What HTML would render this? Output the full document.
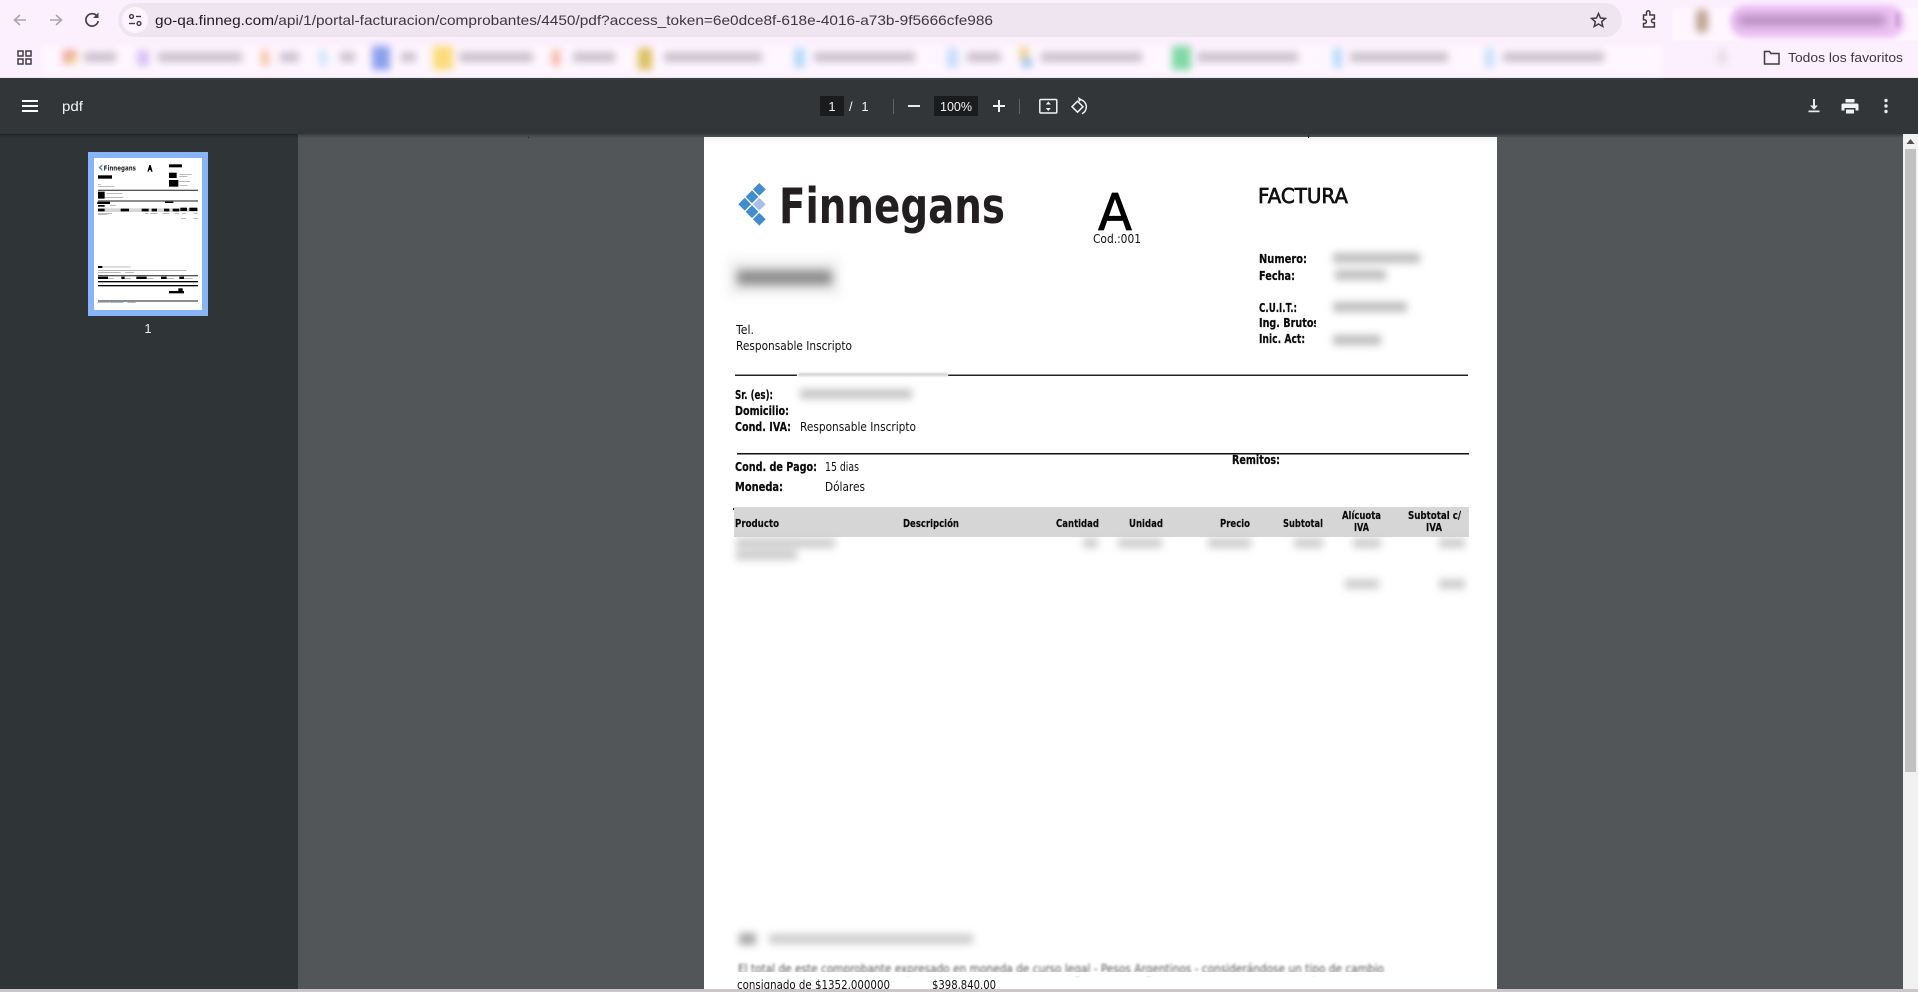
<!DOCTYPE html>
<html lang="es"><head><meta charset="utf-8"><title>pdf</title>
<style>
html,body{margin:0;padding:0;width:1918px;height:992px;overflow:hidden;background:#525659}
svg{position:absolute;left:0;top:0;display:block}
text{font-family:"DejaVu Sans","Liberation Sans",sans-serif}
.ui{font-family:"Liberation Sans",sans-serif}
.b{font-weight:700;font-size:12px;fill:#0a0a0a;stroke:#0a0a0a;stroke-width:.2px}
.r{font-size:12px;fill:#111}
.th{font-weight:700;font-size:11px;fill:#0a0a0a;stroke:#0a0a0a;stroke-width:.15px}
.s1{filter:blur(1px)}.s15{filter:blur(1.3px)}.s2{filter:blur(2px)}.s3{filter:blur(3px)}.s4{filter:blur(4px)}.s5{filter:blur(5px)}
</style></head><body>
<svg width="1918" height="992" viewBox="0 0 1918 992" xmlns="http://www.w3.org/2000/svg">
<defs>
<linearGradient id="sh" x1="0" y1="0" x2="0" y2="1"><stop offset="0" stop-color="#000" stop-opacity=".28"/><stop offset="1" stop-color="#000" stop-opacity="0"/></linearGradient>
<linearGradient id="sh2" x1="0" y1="0" x2="0" y2="1"><stop offset="0" stop-color="#000" stop-opacity=".05"/><stop offset="1" stop-color="#000" stop-opacity="0"/></linearGradient>
</defs>
<!-- Backgrounds -->
<rect x="0" y="0" width="1918" height="78" fill="#fdf0fe"/>
<rect x="0" y="77" width="1918" height="1" fill="#efe6ef"/>
<rect x="0" y="78" width="1918" height="56" fill="#323639"/>
<rect x="0" y="134" width="298" height="858" fill="#2f3437"/>
<rect x="298" y="134" width="1605" height="858" fill="#525659"/>
<rect x="0" y="134" width="1903" height="4" fill="url(#sh)"/>

<!-- URL bar -->
<rect x="118" y="3" width="1504" height="34" rx="17" fill="#efe5f1"/>
<circle cx="135" cy="20" r="13" fill="#fdf4fd"/>
<g fill="none" stroke="#3f3a44" stroke-width="1.4">
<circle cx="131.500" cy="16.500" r="1.900"/><line x1="136" y1="16.500" x2="141" y2="16.500"/>
<circle cx="139" cy="23.500" r="1.900"/><line x1="129" y1="23.500" x2="135" y2="23.500"/>
</g>
<text class="ui" x="155" y="25" font-size="14" fill="#3c3740" textLength="838" lengthAdjust="spacingAndGlyphs"><tspan fill="#1f1b24">go-qa.finneg.com</tspan>/api/1/portal-facturacion/comprobantes/4450/pdf?access_token=6e0dce8f-618e-4016-a73b-9f5666cfe986</text>
<!-- Nav icons -->
<g fill="none" stroke="#aaa4ad" stroke-width="1.600">
<path d="M26 20H15M20 15l-5.500 5 5.500 5"/>
<path d="M50 20h11M56 15l5.500 5-5.500 5"/>
</g>
<path d="M97.300 16.500A6.200 6.200 0 1 0 98.200 21" fill="none" stroke="#45404a" stroke-width="1.700"/>
<path d="M98.500 12.500v5.500h-5.500z" fill="#45404a"/>
<path d="M1598.500 13.500l2 4.500 4.900.5-3.700 3.200 1.100 4.800-4.300-2.500-4.300 2.500 1.100-4.800-3.700-3.200 4.900-.5z" fill="none" stroke="#3f3a44" stroke-width="1.500"/>
<path d="M1643.500 15h3v-2.500a1.700 1.700 0 0 1 3.400 0V15h4.500v4h-1.200a1.800 1.800 0 0 0 0 3.600h1.200v4.400h-10.900v-3.500h1a1.900 1.900 0 0 0 0-3.800h-1z" fill="none" stroke="#3f3a44" stroke-width="1.500"/>

<!-- Profile area (blurred) -->
<rect x="1673" y="8" width="245" height="33" fill="#fff6ff" class="s1"/>
<rect x="1696" y="9" width="12" height="24" rx="6" fill="#bfa28f" class="s4"/>
<rect x="1730" y="5" width="175" height="33" rx="16" fill="#eec4f5" class="s3"/>
<rect x="1738" y="15" width="148" height="11" fill="#b48abf" class="s5"/>
<rect x="1896" y="13" width="3" height="14" fill="#bb92c6" class="s2"/>

<!-- Bookmarks bar -->
<g fill="none" stroke="#3f3a44" stroke-width="1.500"><rect x="18" y="51" width="5" height="5"/><rect x="26" y="51" width="5" height="5"/><rect x="18" y="59" width="5" height="5"/><rect x="26" y="59" width="5" height="5"/></g>
<rect x="42" y="46" width="1620" height="28" fill="#fff7ff" class="s3"/>
<g class="s4">
<rect x="63" y="50" width="14" height="14" fill="#eea099"/><rect x="68" y="56" width="9" height="8" fill="#e9d698"/>
<rect x="137" y="50" width="12" height="16" fill="#d9bff3"/>
<rect x="261" y="50" width="8" height="16" fill="#f5c3a4"/>
<rect x="319" y="50" width="8" height="16" fill="#cce4f9"/>
<rect x="372" y="46" width="18" height="24" fill="#8b9feb"/>
<rect x="433" y="46" width="20" height="24" fill="#fbdb7a"/>
<rect x="552" y="50" width="8" height="16" fill="#f5b39d"/>
<rect x="638" y="48" width="14" height="22" fill="#dcc060"/>
<rect x="794" y="48" width="11" height="20" fill="#b4d9f9"/>
<rect x="947" y="48" width="11" height="20" fill="#c5dcf9"/>
<rect x="1020" y="47" width="8" height="14" fill="#ecd080"/><rect x="1022" y="58" width="10" height="10" fill="#a5c6f0"/>
<rect x="1172" y="46" width="19" height="24" fill="#80d8a5"/>
<rect x="1333" y="48" width="9" height="20" fill="#b4d9f9"/>
<rect x="1485" y="48" width="9" height="20" fill="#c5dff9"/>
<rect x="1718" y="50" width="8" height="14" fill="#e2d8e2"/>
</g>
<g fill="#c9c0cb" class="s4">
<rect x="84" y="52" width="32" height="10"/><rect x="158" y="52" width="84" height="10"/><rect x="280" y="52" width="19" height="10"/><rect x="340" y="52" width="15" height="10"/><rect x="401" y="52" width="15" height="10"/><rect x="459" y="52" width="74" height="10"/><rect x="573" y="52" width="42" height="10"/><rect x="664" y="52" width="98" height="10"/><rect x="814" y="52" width="101" height="10"/><rect x="967" y="52" width="34" height="10"/><rect x="1041" y="52" width="101" height="10"/><rect x="1197" y="52" width="101" height="10"/><rect x="1350" y="52" width="98" height="10"/><rect x="1503" y="52" width="101" height="10"/>
</g>
<path d="M1764.500 51.500h5l1.500 2h8v10.500h-14.500z" fill="none" stroke="#3f3a44" stroke-width="1.500"/>
<text class="ui" x="1788" y="62" font-size="13" fill="#3c3740" textLength="115" lengthAdjust="spacingAndGlyphs">Todos los favoritos</text>

<!-- Viewer toolbar -->
<g fill="#fff"><rect x="22" y="100" width="16" height="2"/><rect x="22" y="105" width="16" height="2"/><rect x="22" y="110" width="16" height="2"/></g>
<text class="ui" x="62" y="111" font-size="14" fill="#f1f3f4" textLength="21" lengthAdjust="spacingAndGlyphs">pdf</text>
<rect x="820" y="96" width="24" height="20" fill="#191b1c"/>
<text class="ui" x="832" y="111" font-size="13" fill="#f1f3f4" text-anchor="middle">1</text>
<text class="ui" x="849" y="111" font-size="13" fill="#f1f3f4">/</text>
<text class="ui" x="865" y="111" font-size="13" fill="#f1f3f4" text-anchor="middle">1</text>
<rect x="893" y="99" width="1" height="15" fill="#5f6368"/>
<rect x="908" y="105" width="12" height="2" fill="#e8eaed"/>
<rect x="934" y="96" width="44" height="20" fill="#191b1c"/>
<text class="ui" x="956" y="111" font-size="13" fill="#f1f3f4" text-anchor="middle" textLength="32" lengthAdjust="spacingAndGlyphs">100%</text>
<path d="M993 105h12v2h-12zM998 100h2v12h-2z" fill="#f1f3f4"/>
<rect x="1019" y="99" width="1" height="15" fill="#5f6368"/>
<rect x="1039.800" y="99.500" width="17" height="13.500" rx="1" fill="none" stroke="#f1f3f4" stroke-width="1.500"/>
<path d="M1048.300 101.500l2.500 3h-5zM1048.300 111l2.500-3h-5z" fill="#f1f3f4"/>
<path d="M1072 106.700l5.500-5.500 5.500 5.500-5.500 5.500z" fill="none" stroke="#f1f3f4" stroke-width="1.500"/>
<path d="M1081 99.700a7.500 7.500 0 0 1 1 14" fill="none" stroke="#f1f3f4" stroke-width="1.500"/>
<path d="M1078 97l4 2.500-3 2.500z" fill="#f1f3f4"/>
<path d="M1813 99h2v6.500h3l-4 4.300-4-4.300h3zM1808.500 110.500h11v1.800h-11z" fill="#e8eaed"/>
<path d="M1845.500 99h9v3.500h-9zM1843 103.500h14a1.500 1.500 0 0 1 1.500 1.500v5.500h-3V108h-11v2.500h-3V105a1.500 1.500 0 0 1 1.500-1.500zM1846 109.500h8v4h-8z" fill="#f1f3f4"/>
<g fill="#e8eaed"><circle cx="1886" cy="100.500" r="1.700"/><circle cx="1886" cy="106" r="1.700"/><circle cx="1886" cy="111.500" r="1.700"/></g>

<!-- Thumbnail -->
<rect x="88" y="152" width="120" height="164" fill="#8ab4f8"/>
<rect x="94" y="158" width="108" height="152" fill="#fff"/>
<g transform="translate(60 140) scale(.33333)">
<path d="M127 73l-12 10 12 10v-6l-6-4 6-4z" fill="#3d8ad0"/>
<text x="131" y="91" font-size="20" font-weight="700" fill="#222" textLength="97" lengthAdjust="spacingAndGlyphs">Finnegans</text>
<path d="M262 95l6-20h4l6 20h-5l-1-5h-5l-1 5z" fill="#000"/>
<g fill="#000">
<rect x="327" y="73" width="39" height="9"/><rect x="114" y="106" width="42" height="10"/>
<rect x="327" y="98" width="23" height="16"/><rect x="327" y="120" width="28" height="20"/>
<rect x="114" y="155" width="20" height="21"/><rect x="112" y="185" width="38" height="7"/><rect x="114" y="195" width="20" height="5"/><rect x="315" y="183" width="25" height="6"/>
<rect x="114" y="378" width="13" height="6"/>
<rect x="114" y="423" width="300" height="4"/><rect x="114" y="435" width="300" height="4"/>
<rect x="327" y="453" width="45" height="7"/><rect x="355" y="445" width="13" height="8"/>
</g>
<g fill="#555">
<rect x="114" y="149" width="300" height="4"/><rect x="114" y="181" width="300" height="4"/><rect x="114" y="405" width="300" height="4"/><rect x="114" y="481" width="300" height="4"/>
</g>
<rect x="112" y="205" width="302" height="11" fill="#d6d6d6"/>
<g fill="#000"><rect x="114" y="206" width="20" height="8"/><rect x="182" y="206" width="25" height="8"/><rect x="245" y="206" width="21" height="8"/><rect x="275" y="206" width="16" height="8"/><rect x="312" y="206" width="16" height="8"/><rect x="338" y="206" width="20" height="8"/><rect x="361" y="203" width="20" height="10"/><rect x="388" y="203" width="24" height="10"/>
<rect x="114" y="410" width="30" height="7"/><rect x="184" y="410" width="10" height="7"/><rect x="229" y="410" width="31" height="7"/><rect x="303" y="410" width="17" height="7"/><rect x="358" y="410" width="14" height="7"/></g>
<g fill="#999">
<rect x="358" y="102" width="37" height="2"/><rect x="358" y="108" width="24" height="2"/><rect x="358" y="124" width="32" height="2"/><rect x="358" y="135" width="24" height="2"/>
<rect x="114" y="132" width="8" height="2"/><rect x="114" y="138" width="49" height="2"/><rect x="140" y="160" width="47" height="2"/><rect x="134" y="172" width="56" height="2"/><rect x="150" y="196" width="18" height="2"/>
<rect x="114" y="219" width="42" height="2"/><rect x="114" y="223" width="28" height="2"/><rect x="255" y="219" width="10" height="2"/><rect x="270" y="219" width="22" height="2"/><rect x="308" y="219" width="20" height="2"/><rect x="345" y="219" width="12" height="2"/><rect x="367" y="219" width="12" height="2"/><rect x="400" y="219" width="12" height="2"/>
<rect x="363" y="235" width="15" height="2"/><rect x="400" y="235" width="14" height="2"/>
<rect x="127" y="380" width="85" height="2"/><rect x="114" y="391" width="266" height="2"/><rect x="114" y="397" width="68" height="2"/><rect x="195" y="397" width="27" height="2"/>
<rect x="144" y="415" width="18" height="2"/><rect x="194" y="415" width="18" height="2"/><rect x="260" y="415" width="20" height="2"/><rect x="320" y="415" width="22" height="2"/><rect x="372" y="415" width="26" height="2"/>
<rect x="202" y="487" width="25" height="2"/>
</g>
<rect x="112" y="486" width="36" height="3" fill="#b9c4cc"/><rect x="150" y="486" width="40" height="3" fill="#9fbfd9"/>
</g>
<text class="ui" x="148" y="333" font-size="13" fill="#e8eaed" text-anchor="middle">1</text>

<!-- Page -->
<rect x="704" y="137" width="793" height="855" fill="#fff"/>
<rect x="704" y="137" width="793" height="8" fill="url(#sh2)"/>
<rect x="1308" y="135" width="1" height="3" fill="#222"/><rect x="528" y="137" width="1" height="1" fill="#222"/>

<!-- Logo -->
<g fill="#3f8ccf">
<path d="M759.300 183l6.400 6.400-6.400 6.400-6.400-6.400z"/>
<path d="M752 190.400l6.400 6.400-6.400 6.400-6.400-6.400z"/>
<path d="M744.700 197.800l6.400 6.400-6.400 6.400-6.400-6.400z"/>
<path d="M752 205.300l6.400 6.400-6.400 6.400-6.400-6.400z"/>
<path d="M759.300 212.800l6.400 6.400-6.400 6.400-6.400-6.400z"/>
</g>
<path d="M759.300 197.800l6.400 6.400-6.400 6.400-6.400-6.400z" fill="#a9bfe8"/>
<text x="779" y="223" font-size="49" font-weight="700" fill="#231f20" textLength="226" lengthAdjust="spacingAndGlyphs">Finnegans</text>

<text x="1098" y="230" font-size="51" fill="#000" stroke="#000" stroke-width=".8" textLength="34" lengthAdjust="spacingAndGlyphs">A</text>
<text class="r" x="1093" y="243" textLength="48" lengthAdjust="spacingAndGlyphs">Cod.:001</text>
<text x="1258" y="203" font-size="20" fill="#111" stroke="#111" stroke-width=".7" textLength="90" lengthAdjust="spacingAndGlyphs">FACTURA</text>

<rect x="728" y="258" width="112" height="38" fill="#f2f2f2" class="s5"/>
<rect x="737" y="270" width="95" height="15" fill="#8a8a8a" class="s5"/>

<text class="r" x="736" y="334" textLength="18" lengthAdjust="spacingAndGlyphs">Tel.</text>
<text class="r" x="736" y="350" textLength="116" lengthAdjust="spacingAndGlyphs">Responsable Inscripto</text>

<text class="b" x="1259" y="263" textLength="48" lengthAdjust="spacingAndGlyphs">Numero:</text>
<text class="b" x="1259" y="280" textLength="36" lengthAdjust="spacingAndGlyphs">Fecha:</text>
<text class="b" x="1259" y="312" textLength="38" lengthAdjust="spacingAndGlyphs">C.U.I.T.:</text>
<text class="b" x="1259" y="327" textLength="64" lengthAdjust="spacingAndGlyphs">Ing. Brutos:</text>
<text class="b" x="1259" y="343" textLength="46" lengthAdjust="spacingAndGlyphs">Inic. Act:</text>
<rect x="1316" y="243" width="117" height="111" fill="#fff"/>
<g fill="#bdbdbd" class="s4"><rect x="1333" y="253" width="87" height="10"/><rect x="1335" y="270" width="51" height="10"/><rect x="1333" y="302" width="74" height="10"/><rect x="1333" y="335" width="48" height="10"/></g>

<!-- Customer -->
<rect x="735" y="374.500" width="733" height="1.500" fill="#222"/>
<rect x="797" y="373" width="151" height="44" fill="#fff"/>
<rect x="798" y="373" width="150" height="3" fill="#cfcfcf" class="s1"/>
<rect x="800" y="389" width="112" height="10" fill="#c6c6c6" class="s4"/>
<text class="b" x="735" y="399" textLength="38" lengthAdjust="spacingAndGlyphs">Sr. (es):</text>
<text class="b" x="735" y="415" textLength="54" lengthAdjust="spacingAndGlyphs">Domicilio:</text>
<text class="b" x="735" y="431" textLength="56" lengthAdjust="spacingAndGlyphs">Cond. IVA:</text>
<text class="r" x="800" y="431" textLength="116" lengthAdjust="spacingAndGlyphs">Responsable Inscripto</text>
<rect x="737" y="453" width="732" height="1.500" fill="#111"/>
<text class="b" x="735" y="471" textLength="82" lengthAdjust="spacingAndGlyphs">Cond. de Pago:</text>
<text class="r" x="825" y="471" textLength="34" lengthAdjust="spacingAndGlyphs">15 dias</text>
<text class="b" x="1232" y="464" textLength="48" lengthAdjust="spacingAndGlyphs">Remitos:</text>
<text class="b" x="735" y="491" textLength="48" lengthAdjust="spacingAndGlyphs">Moneda:</text>
<text class="r" x="825" y="491" textLength="40" lengthAdjust="spacingAndGlyphs">Dólares</text>

<!-- Table -->
<rect x="733" y="508" width="1" height="2" fill="#111"/>
<rect x="734" y="507" width="735" height="30" fill="#d6d6d6"/>
<text class="th" x="735" y="527" textLength="44" lengthAdjust="spacingAndGlyphs">Producto</text>
<text class="th" x="903" y="527" textLength="56" lengthAdjust="spacingAndGlyphs">Descripción</text>
<text class="th" x="1056" y="527" textLength="43" lengthAdjust="spacingAndGlyphs">Cantidad</text>
<text class="th" x="1129" y="527" textLength="34" lengthAdjust="spacingAndGlyphs">Unidad</text>
<text class="th" x="1220" y="527" textLength="30" lengthAdjust="spacingAndGlyphs">Precio</text>
<text class="th" x="1283" y="527" textLength="40" lengthAdjust="spacingAndGlyphs">Subtotal</text>
<text class="th" x="1342" y="519" textLength="39" lengthAdjust="spacingAndGlyphs">Alícuota</text>
<text class="th" x="1354" y="531" textLength="15" lengthAdjust="spacingAndGlyphs">IVA</text>
<text class="th" x="1408" y="519" textLength="53" lengthAdjust="spacingAndGlyphs">Subtotal c/</text>
<text class="th" x="1426" y="531" textLength="16" lengthAdjust="spacingAndGlyphs">IVA</text>
<g fill="#cdcdcd" class="s4">
<rect x="736" y="538" width="99" height="10"/><rect x="736" y="550" width="61" height="10"/><rect x="1083" y="538" width="15" height="10"/><rect x="1118" y="538" width="44" height="10"/><rect x="1208" y="538" width="43" height="10"/><rect x="1294" y="538" width="29" height="10"/><rect x="1353" y="538" width="28" height="10"/><rect x="1439" y="538" width="26" height="10"/>
<rect x="1345" y="579" width="34" height="10"/><rect x="1439" y="579" width="26" height="10"/>
</g>

<!-- Footer text -->
<rect x="739" y="933" width="17" height="12" fill="#aaa" class="s4"/>
<rect x="769" y="934" width="204" height="10" fill="#cdcdcd" class="s4"/>
<text x="738" y="973" font-size="12" fill="#555" textLength="646" lengthAdjust="spacingAndGlyphs" class="s15">El total de este comprobante expresado en moneda de curso legal - Pesos Argentinos - considerándose un tipo de cambio</text>
<rect x="730" y="972" width="680" height="4" fill="#fff"/>
<text class="r" x="737" y="989" textLength="153" lengthAdjust="spacingAndGlyphs">consignado de $1352.000000</text>
<text class="r" x="932" y="989" textLength="64" lengthAdjust="spacingAndGlyphs">$398.840.00</text>

<!-- Scrollbar -->
<rect x="1903" y="134" width="15" height="858" fill="#f1f1f1"/>
<path d="M1910.500 139l4 5h-8z" fill="#505050"/>
<rect x="1905" y="149" width="11" height="623" fill="#c1c1c1"/>
<rect x="0" y="989" width="1918" height="3" fill="#cac6ca"/>
</svg>
</body></html>
